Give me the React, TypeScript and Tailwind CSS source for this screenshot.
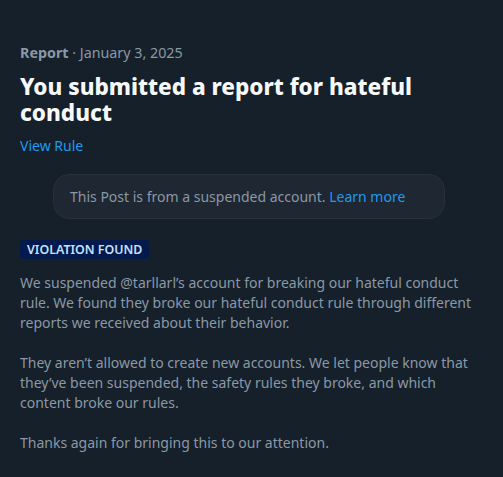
export default function App() {
  return (
    <div
      className="min-h-[477px] w-full bg-[#15202b] px-5 pt-[43px] text-[14px] leading-5"
      style={{ fontFamily: '"Noto Sans", "Open Sans", sans-serif' }}
    >
      {/* Header */}
      <p className="text-[14.3px] text-[#8b98a5]">
        <span className="font-bold">Report</span> · January 3, 2025
      </p>
      <h1 className="mt-[11px] text-[22.5px] font-extrabold leading-[26px] text-[#f7f9f9]">
        You submitted a report for hateful conduct
      </h1>
      <a href="#" className="mt-[10px] block text-[#1d9bf0]">
        View Rule
      </a>

      {/* Suspended post notice */}
      <div className="ml-[33px] mt-[18px] flex h-[45px] w-[392px] items-center rounded-2xl border border-[#27313b] bg-[#1e2732] px-4 text-[#8b98a5]">
        <span>
          This Post is from a suspended account.{' '}
          <a href="#" className="text-[#1d9bf0]">
            Learn more
          </a>
        </span>
      </div>

      {/* Result */}
      <span className="mt-[21px] inline-block rounded bg-[#041a4d] px-[7px] text-[12.4px] font-semibold leading-[19px] text-[#c6e1fb]">
        VIOLATION FOUND
      </span>
      <div className="mt-[14px] space-y-5 pb-6 text-[#8b98a5]">
        <p>
          We suspended @tarllarl’s account for breaking our hateful conduct rule. We found they
          broke our hateful conduct rule through different reports we received about their
          behavior.
        </p>
        <p>
          They aren’t allowed to create new accounts. We let people know that they’ve been
          suspended, the safety rules they broke, and which content broke our rules.
        </p>
        <p>Thanks again for bringing this to our attention.</p>
      </div>
    </div>
  );
}
